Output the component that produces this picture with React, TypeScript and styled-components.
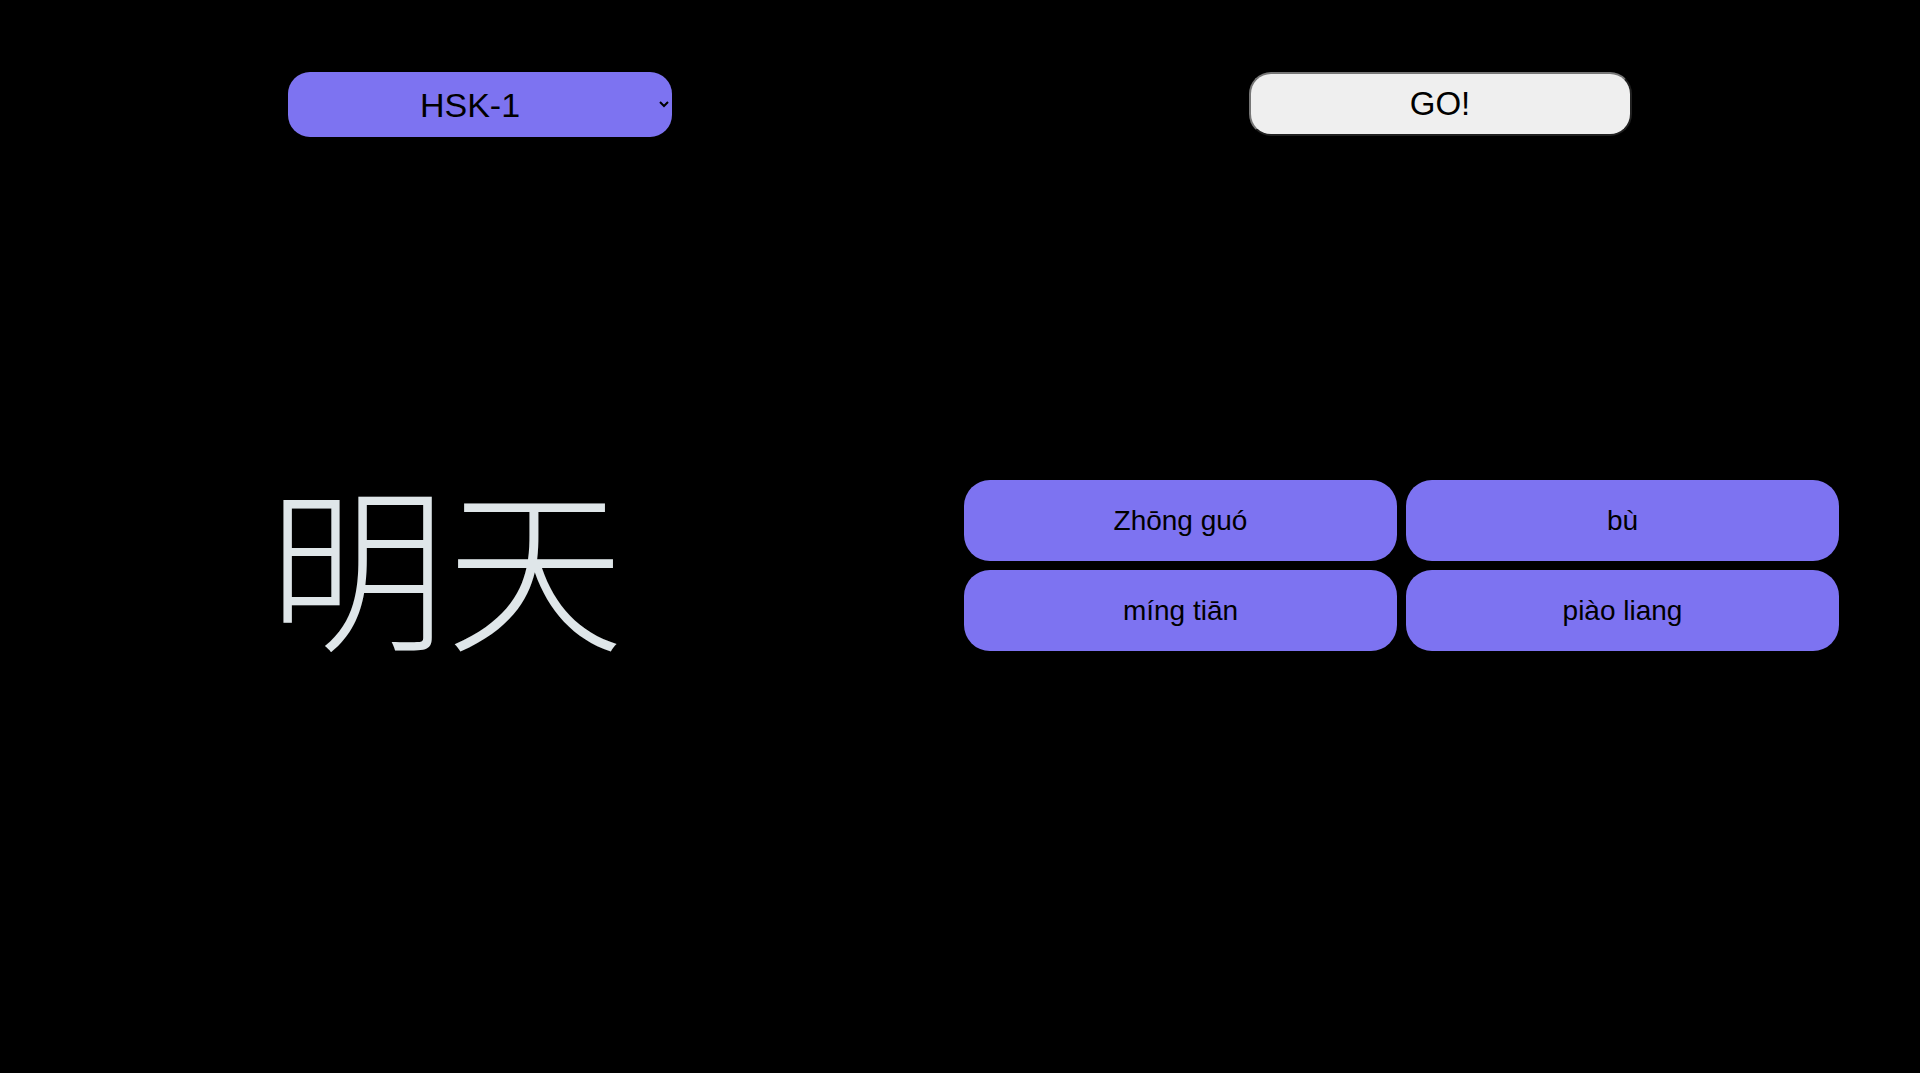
import React from "react";
import styled, { createGlobalStyle } from "styled-components";

const Global = createGlobalStyle`
  html, body {
    margin: 0;
    padding: 0;
    background: #000;
  }
  body {
    font-family: "Liberation Sans", Arial, sans-serif;
  }
`;

const Page = styled.div`
  display: grid;
  grid-template-columns: 960px 960px;
  height: 1073px;
  background: #000;
`;

const Column = styled.div`
  display: flex;
  flex-direction: column;
  padding-top: 72px;
`;

const LevelSelect = styled.select`
  align-self: center;
  box-sizing: border-box;
  width: 384px;
  height: 65px;
  border: none;
  border-radius: 22px;
  background-color: #7d73f1;
  color: #000;
  font-family: "Liberation Sans", Arial, sans-serif;
  font-size: 34px;
  text-align: center;
  padding: 0 12px 0 4px;
  outline: none;
`;

const Hanzi = styled.div`
  margin-top: 335px;
  padding-left: 268px;
  font-family: "Noto Sans CJK SC", "Noto Sans CJK JP", sans-serif;
  font-weight: 300;
  font-size: 178px;
  line-height: 1;
  color: #dfe6e9;
`;

const GoButton = styled.button`
  align-self: center;
  box-sizing: border-box;
  width: 383px;
  height: 64px;
  border: 2px outset #767676;
  border-radius: 22px;
  background: #efefef;
  color: #000;
  font-family: "Liberation Sans", Arial, sans-serif;
  font-size: 33px;
  cursor: pointer;
`;

const Choices = styled.div`
  margin-top: 344px;
  margin-left: 4px;
  width: 875px;
  display: grid;
  grid-template-columns: 1fr 1fr;
  gap: 9px 9px;
`;

const Choice = styled.button`
  height: 81px;
  border: none;
  border-radius: 26px;
  background: #7d73f1;
  color: #000;
  font-family: "Liberation Sans", Arial, sans-serif;
  font-size: 28px;
  cursor: pointer;
`;

const options = ["Zhōng guó", "bù", "míng tiān", "piào liang"];

export default function App() {
  return (
    <>
      <Global />
      <Page>
        <Column>
          <LevelSelect defaultValue="HSK-1">
            <option>HSK-1</option>
            <option>HSK-2</option>
            <option>HSK-3</option>
            <option>HSK-4</option>
            <option>HSK-5</option>
            <option>HSK-6</option>
          </LevelSelect>
          <Hanzi>明天</Hanzi>
        </Column>
        <Column>
          <GoButton>GO!</GoButton>
          <Choices>
            {options.map((o) => (
              <Choice key={o}>{o}</Choice>
            ))}
          </Choices>
        </Column>
      </Page>
    </>
  );
}
